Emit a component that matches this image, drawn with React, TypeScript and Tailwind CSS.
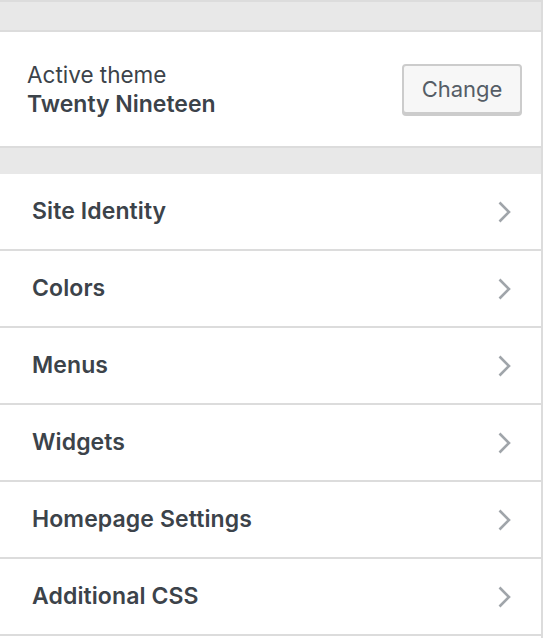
const sections = [
  "Site Identity",
  "Colors",
  "Menus",
  "Widgets",
  "Homepage Settings",
  "Additional CSS",
];

function Chevron() {
  return (
    <svg width="16" height="24" viewBox="0 0 16 24" fill="none" className="text-[#a0a5aa]">
      <path d="M3.5 2.5l9.5 9.5-9.5 9.5" stroke="currentColor" strokeWidth="2.6" />
    </svg>
  );
}

export default function App() {
  return (
    <div
      className="w-[543px] h-[638px] bg-white border-r-2 border-[#dcdcdc] flex flex-col"
      style={{ fontFamily: "Inter, 'Liberation Sans', sans-serif" }}
    >
      <div className="h-[32px] shrink-0 bg-[#e8e8e8] border-y-2 border-[#dcdcdc]" />

      {/* active theme */}
      <div className="h-[114px] shrink-0 flex items-center justify-between pl-[27px] pr-[19px]">
        <div className="flex flex-col gap-[3px]">
          <span className="text-[22.5px] leading-[27px] text-[#3c434a]">Active theme</span>
          <span className="text-[23px] leading-[27px] font-semibold text-[#3c434a]">Twenty Nineteen</span>
        </div>
        <button className="w-[120px] h-[50px] rounded-[4px] border-2 border-[#cccccc] bg-[#f7f7f7] shadow-[0_2px_0_#cccccc] text-[22px] text-[#555d66]">
          Change
        </button>
      </div>

      <div className="h-[28px] shrink-0 bg-[#e8e8e8] border-t-2 border-[#dcdcdc]" />

      {sections.map((label) => (
        <div
          key={label}
          className="h-[77px] shrink-0 flex items-center justify-between pl-[32px] pr-[29px] border-b-2 border-[#dcdcdc]"
        >
          <span className="text-[23px] font-semibold text-[#3c434a] tracking-[0.1px]">{label}</span>
          <Chevron />
        </div>
      ))}
    </div>
  );
}
